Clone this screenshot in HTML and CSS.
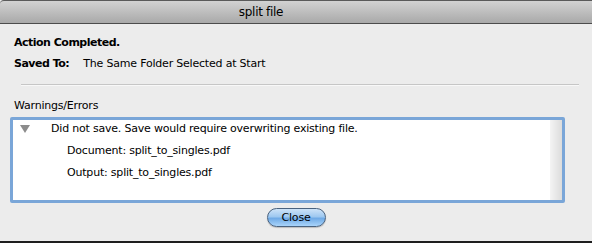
FILE: index.html
```html
<!DOCTYPE html>
<html lang="en">
<head>
  <meta charset="UTF-8" />
  <title>split file</title>
  <link rel="stylesheet" href="styles.css">
</head>
<body>
  <div class="window">
    <div class="title-bar">split file</div>
    <div class="content">
      <div class="status-row"><span class="label-strong">Action Completed.</span></div>
      <div class="status-row">
        <span class="label-strong saved-label">Saved To:</span>
        <span>The Same Folder Selected at Start</span>
      </div>
      <div class="separator"></div>
      <div class="section-label">Warnings/Errors</div>
      <div class="list-box">
        <div class="list-items">
          <div class="list-row">
            <span class="disclosure"></span>
            <span>Did not save. Save would require overwriting existing file.</span>
          </div>
          <div class="list-row child">Document: split_to_singles.pdf</div>
          <div class="list-row child">Output: split_to_singles.pdf</div>
        </div>
        <div class="scroll-track"></div>
      </div>
      <div class="button-row">
        <button class="close-btn">Close</button>
      </div>
    </div>
  </div>
</body>
</html>
```

FILE: styles.css
```css
body {
  margin: 0;
  padding: 0;
  font-family: "DejaVu Sans", sans-serif;
  font-size: 11px;
  letter-spacing: -0.2px;
  color: #000;
  background: #ececec;
}

.window {
  width: 592px;
  height: 243px;
  background: #ececec;
  border-bottom: 2px solid #1e1e1e;
  box-sizing: border-box;
  overflow: hidden;
}

.title-bar {
  height: 24px;
  line-height: 23px;
  border-top: 1px solid #5a5a5a;
  border-bottom: 1px solid #4c4c4c;
  border-top-left-radius: 4px;
  background: linear-gradient(#d2d2d2, #a9a9a9);
  text-align: center;
  font-size: 12px;
  letter-spacing: -0.3px;
  padding-right: 70px;
  box-sizing: border-box;
}

.content {
  padding: 8px 0 0 14px;
}

.status-row {
  line-height: 21px;
  height: 21px;
}

.label-strong {
  font-weight: bold;
  letter-spacing: -0.5px;
}

.saved-label {
  display: inline-block;
  width: 66px;
}

.separator {
  margin: 10px 13px 0 7px;
  height: 1px;
  background: #c6c6c6;
  border-bottom: 1px solid #f8f8f8;
}

.section-label {
  margin-top: 9px;
  line-height: 21px;
  height: 21px;
}

.list-box {
  display: flex;
  margin: 1px 0 0 -4px;
  width: 555px;
  height: 86px;
  box-sizing: border-box;
  border: 3px solid #7aa6d8;
  border-radius: 2px;
  background: #fff;
}

.list-items {
  flex: 1;
  margin-top: -3px;
}

.list-row {
  display: flex;
  align-items: center;
  height: 22px;
}

.disclosure {
  width: 0;
  height: 0;
  margin: 2px 21px 0 7px;
  border-left: 5px solid transparent;
  border-right: 5px solid transparent;
  border-top: 8px solid #8c8c8c;
}

.list-row.child {
  padding-left: 54px;
}

.scroll-track {
  width: 12px;
  background: linear-gradient(to right, #f4f4f4, #dcdcdc);
}

.button-row {
  display: flex;
  justify-content: center;
  margin: 5px 0 0 -14px;
}

.close-btn {
  width: 59px;
  height: 19px;
  padding: 0;
  font-family: "DejaVu Sans", sans-serif;
  font-size: 11px;
  letter-spacing: -0.2px;
  color: #000;
  border: 1px solid #49627f;
  border-radius: 10px;
  background: linear-gradient(#cde3f8 0%, #9ec8f0 45%, #6faae6 55%, #a9d4fa 100%);
  box-shadow: 0 1px 1px rgba(0, 0, 0, 0.2);
}
```
